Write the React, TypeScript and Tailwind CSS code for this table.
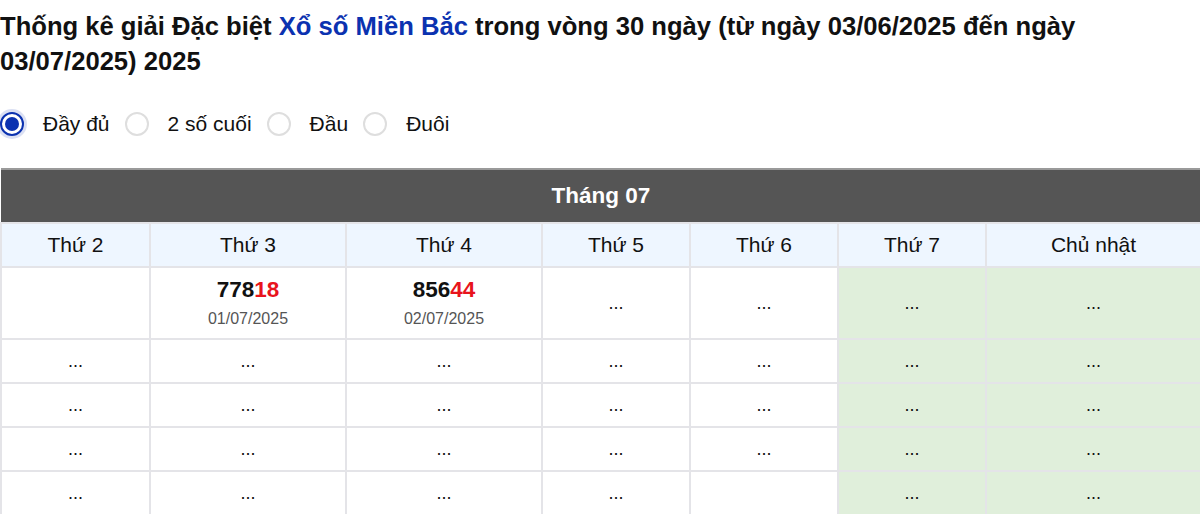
import { useState } from "react";

const days = ["Thứ 2", "Thứ 3", "Thứ 4", "Thứ 5", "Thứ 6", "Thứ 7", "Chủ nhật"];
const widths = ["w-[149px]", "w-[196px]", "w-[196px]", "w-[148px]", "w-[148px]", "w-[148px]", "w-[215px]"];

type Cell = { date?: string; empty?: boolean } | null;

const results: Record<string, { head: string; tail: string }> = {
  "01/07/2025": { head: "778", tail: "18" },
  "02/07/2025": { head: "856", tail: "44" },
};

const rows: Cell[][] = [
  [{ empty: true }, { date: "01/07/2025" }, { date: "02/07/2025" }, null, null, null, null],
  [null, null, null, null, null, null, null],
  [null, null, null, null, null, null, null],
  [null, null, null, null, null, null, null],
  [null, null, null, null, { empty: true }, null, null],
];

const options = ["Đầy đủ", "2 số cuối", "Đầu", "Đuôi"];

function Radio({ checked }: { checked: boolean }) {
  return checked ? (
    <span className="flex h-6 w-6 items-center justify-center rounded-full border-2 border-[#0b32b0] bg-white shadow-[0_0_0_3px_rgba(11,50,176,0.15)]">
      <span className="h-[14px] w-[14px] rounded-full bg-[#0b32b0]" />
    </span>
  ) : (
    <span className="h-6 w-6 rounded-full border-2 border-[#dedede] bg-white" />
  );
}

export default function App() {
  const [mode, setMode] = useState(0);

  return (
    <div className="bg-white text-[#111] font-['Liberation_Sans',Arial,sans-serif]">
      {/* Title */}
      <h1 className="pt-[9px] text-[25.6px] font-bold leading-[35px]">
        Thống kê giải Đặc biệt <span className="text-[#0b32b0]">Xổ số Miền Bắc</span> trong vòng 30 ngày (từ ngày
        03/06/2025 đến ngày 03/07/2025) 2025
      </h1>

      {/* Mode radios */}
      <div className="mt-[33px] flex items-center">
        {options.map((o, i) => (
          <label key={o} className="mr-[15px] flex cursor-pointer items-center" onClick={() => setMode(i)}>
            <Radio checked={mode === i} />
            <span className="ml-[19px] text-[21px] leading-6">{o}</span>
          </label>
        ))}
      </div>

      {/* Calendar table */}
      <table className="mt-[32px] w-[1200px] table-fixed border-collapse text-center">
        <colgroup>
          {widths.map((w, i) => (
            <col key={i} className={w} />
          ))}
        </colgroup>
        <thead>
          <tr>
            <th colSpan={7} className="h-[54px] border-t-2 border-[#9a9a9a] bg-[#555555] text-[22.5px] font-bold text-white">
              Tháng 07
            </th>
          </tr>
          <tr>
            {days.map((d) => (
              <th key={d} className="h-[44px] border-2 border-[#e4e4e8] bg-[#eef6ff] text-[21px] font-normal">
                {d}
              </th>
            ))}
          </tr>
        </thead>
        <tbody>
          {rows.map((r, ri) => (
            <tr key={ri} className={ri === 0 ? "h-[72px]" : "h-[44px]"}>
              {r.map((c, ci) => {
                const weekend = ci >= 5;
                const res = c?.date ? results[c.date] : undefined;
                return (
                  <td
                    key={ci}
                    className={`border-2 border-[#e4e4e8] p-0 align-middle ${weekend ? "bg-[#e0efdb]" : "bg-white"}`}
                  >
                    {res ? (
                      <div className="flex flex-col items-center">
                        <span className="text-[22.5px] font-bold leading-[26px]">
                          {res.head}
                          <span className="text-[#e8141c]">{res.tail}</span>
                        </span>
                        <span className="mt-[6px] text-[16px] leading-[20px] text-[#555]">{c?.date}</span>
                      </div>
                    ) : c?.empty ? null : (
                      <span className="text-[18px]">...</span>
                    )}
                  </td>
                );
              })}
            </tr>
          ))}
        </tbody>
      </table>
    </div>
  );
}
